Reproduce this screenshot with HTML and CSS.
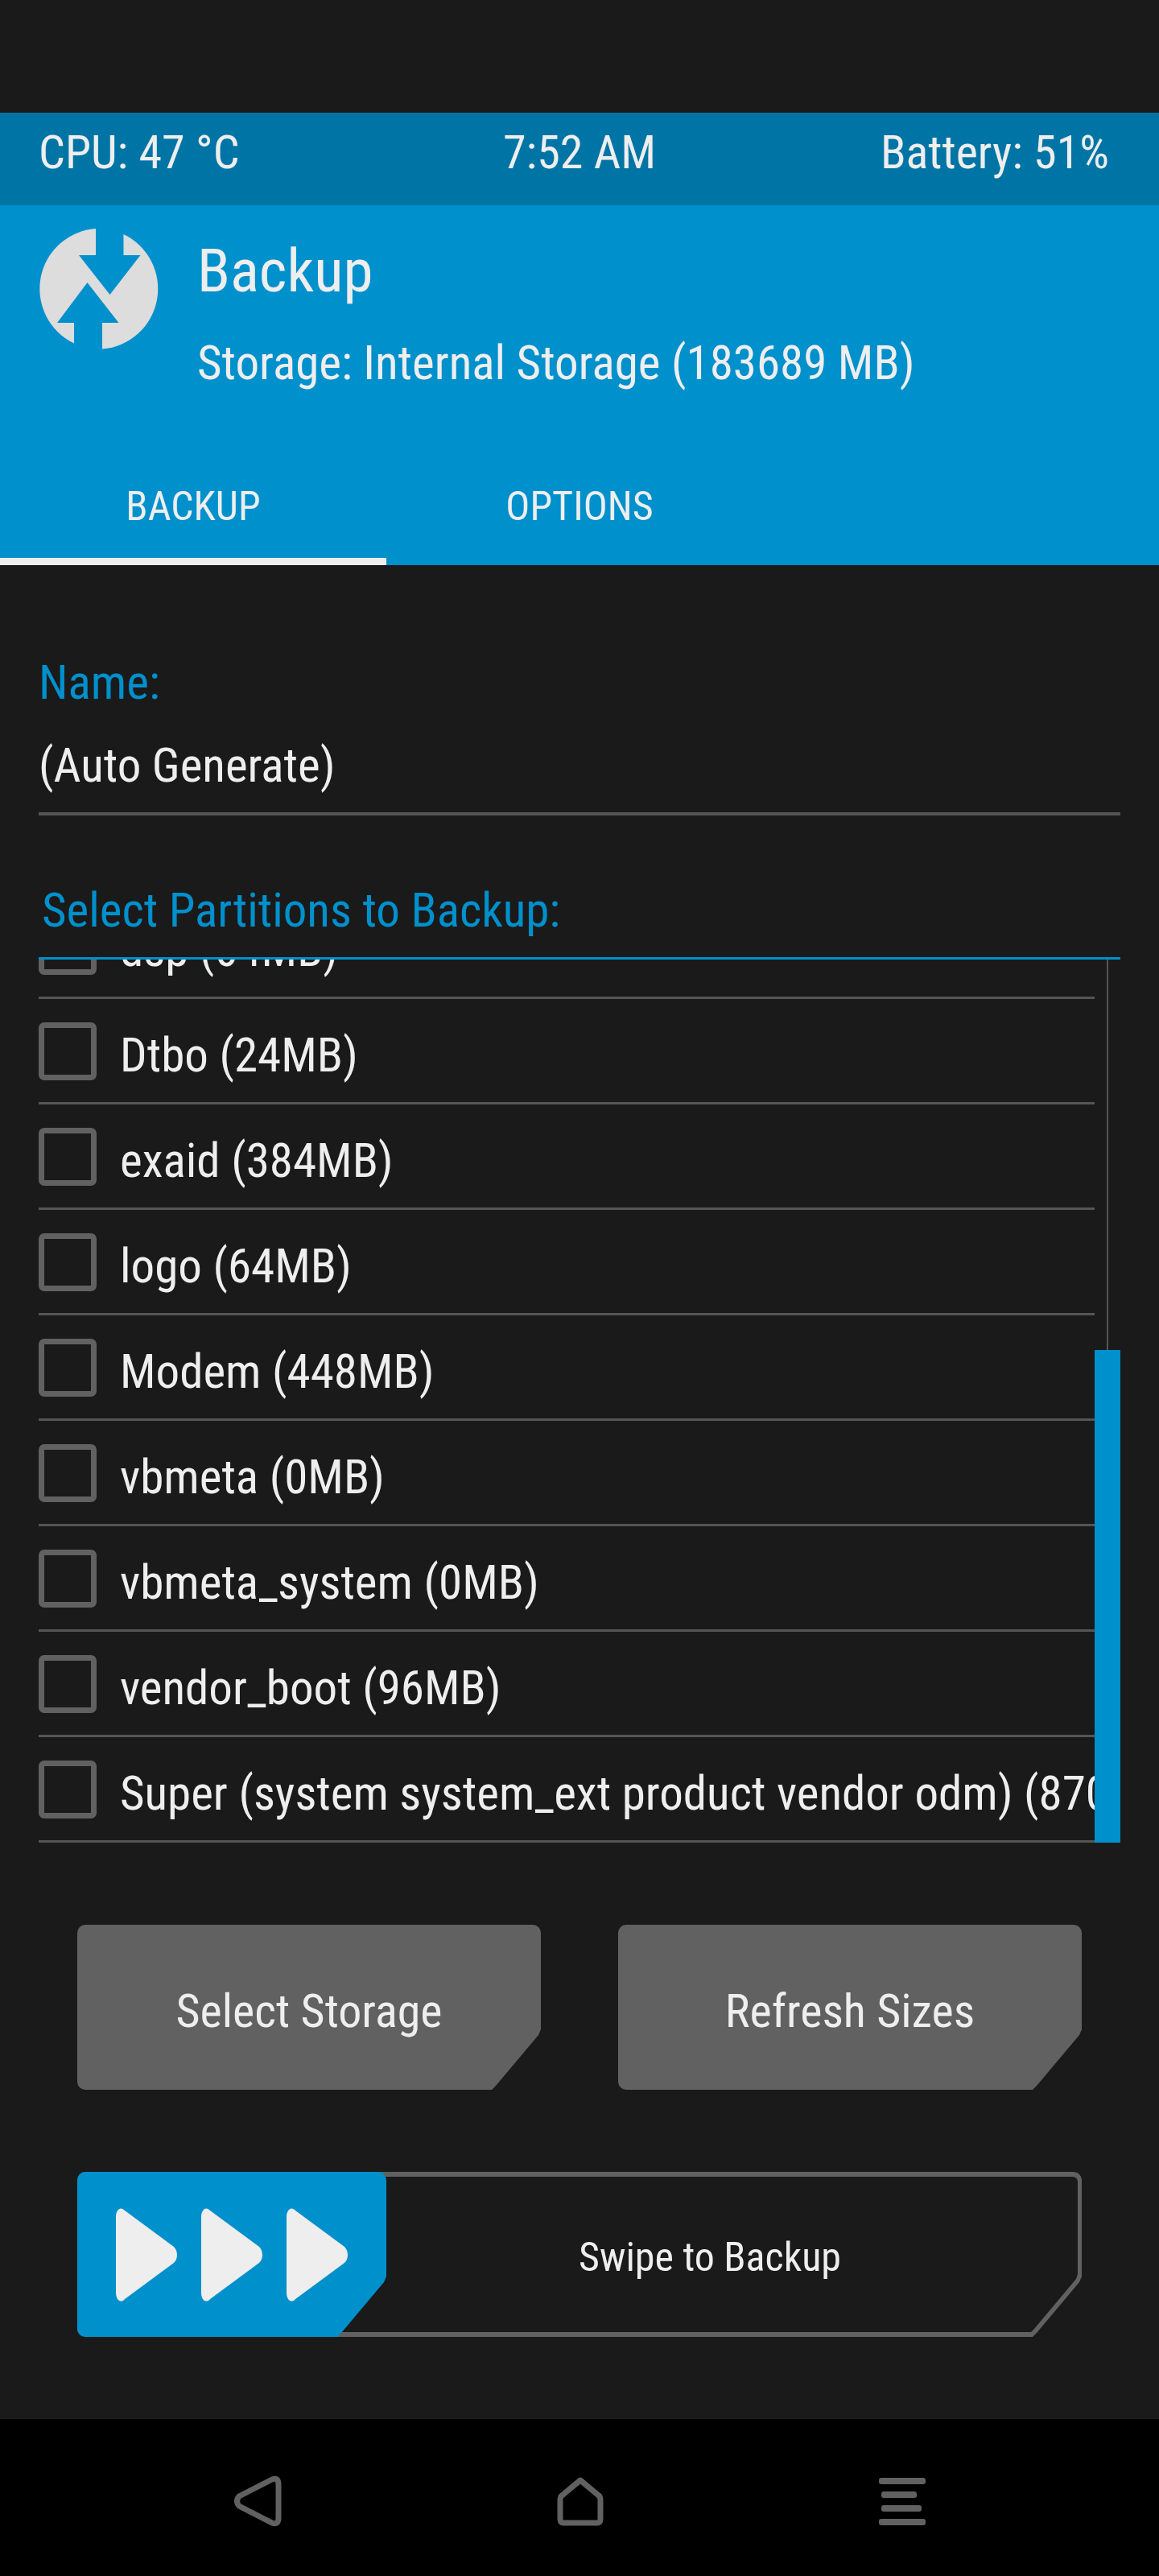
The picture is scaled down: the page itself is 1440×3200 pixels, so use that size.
FILE: index.html
```html
<!DOCTYPE html>
<html lang="en">
<head>
<meta charset="utf-8">
<meta name="viewport" content="width=device-width, initial-scale=1">
<title>Backup</title>
<link rel="stylesheet" href="styles.css">
</head>
<body>
<div class="page">
  <div class="statusbar">
    <span>CPU: 47 °C</span>
    <span class="clock">7:52 AM</span>
    <span class="battery">Battery: 51%</span>
  </div>
  <header class="header">
    <div class="heading">
      <svg class="logo" viewBox="0 0 150 150" aria-hidden="true">
        <path fill="#dddddd" d="M71 0V33H50L88.500 82L126.500 33H105.500V7A75 75 0 0 1 79 149.500V117H99.500L60.500 67L23 117H44V142.500A75 75 0 0 1 71 0Z"/>
      </svg>
      <div class="titles">
        <h1 class="title">Backup</h1>
        <p class="subtitle">Storage: Internal Storage (183689 MB)</p>
      </div>
    </div>
    <nav class="tabs">
      <a class="tab tab-active" href="#backup">BACKUP</a>
      <a class="tab" href="#options">OPTIONS</a>
    </nav>
  </header>
  <main class="main" id="backup">
    <label class="caption" for="name">Name:</label>
    <input class="name" id="name" type="text" value="(Auto Generate)">
    <h2 class="caption list-caption">Select Partitions to Backup:</h2>
    <div class="list">
      <ul class="rows">
        <li class="row"><input class="check" type="checkbox" id="p1"><label class="row-label" for="p1">dsp (64MB)</label></li>
        <li class="row"><input class="check" type="checkbox" id="p2"><label class="row-label" for="p2">Dtbo (24MB)</label></li>
        <li class="row"><input class="check" type="checkbox" id="p3"><label class="row-label" for="p3">exaid (384MB)</label></li>
        <li class="row"><input class="check" type="checkbox" id="p4"><label class="row-label" for="p4">logo (64MB)</label></li>
        <li class="row"><input class="check" type="checkbox" id="p5"><label class="row-label" for="p5">Modem (448MB)</label></li>
        <li class="row"><input class="check" type="checkbox" id="p6"><label class="row-label" for="p6">vbmeta (0MB)</label></li>
        <li class="row"><input class="check" type="checkbox" id="p7"><label class="row-label" for="p7">vbmeta_system (0MB)</label></li>
        <li class="row"><input class="check" type="checkbox" id="p8"><label class="row-label" for="p8">vendor_boot (96MB)</label></li>
        <li class="row"><input class="check" type="checkbox" id="p9"><label class="row-label" for="p9">Super (system system_ext product vendor odm) (870</label></li>
      </ul>
      <div class="scrollbar"><div class="track"></div><div class="thumb"></div></div>
    </div>
    <div class="actions">
      <button class="action cut" type="button">Select Storage</button>
      <button class="action cut" type="button">Refresh Sizes</button>
    </div>
    <button class="swipe cut" type="button">
      <span class="handle cut">
        <svg class="arrows" viewBox="0 0 288 116" aria-hidden="true">
          <g fill="#eeeeee">
            <path id="arrow" d="M0 11C0 2 6-3 11 3L72 48Q76 52 76 58Q76 64 72 68L11 113C6 119 0 114 0 105Z"/>
            <use href="#arrow" x="106"/>
            <use href="#arrow" x="212"/>
          </g>
        </svg>
      </span>
      <span class="swipe-label">Swipe to Backup</span>
    </button>
  </main>
  <nav class="navbar">
    <button class="key" type="button" aria-label="Back">
      <svg class="key-icon" viewBox="0 0 60 64"><path d="M47 5L6 26Q1 32 6 38L47 59Q55 62 55 53V11Q55 2 47 5Z" fill="none" stroke="#616161" stroke-width="7"/></svg>
    </button>
    <button class="key" type="button" aria-label="Home">
      <svg class="key-icon" viewBox="0 0 60 64"><path d="M30 6L6 26Q5 28 5 31V54Q5 59 9 59H51Q55 59 55 54V31Q55 28 54 26Z" fill="none" stroke="#616161" stroke-width="7" stroke-linejoin="round"/></svg>
    </button>
    <button class="key" type="button" aria-label="Menu">
      <svg class="key-icon" viewBox="0 0 60 64"><g fill="#616161"><rect x="1" y="3" width="58" height="8" rx="3"/><rect x="4" y="20" width="44" height="8" rx="3"/><rect x="4" y="37" width="50" height="8" rx="3"/><rect x="1" y="54" width="58" height="8" rx="3"/></g></svg>
    </button>
  </nav>
</div>
</body>
</html>
```
FILE: styles.css
```css
* { box-sizing: border-box; }

body {
  margin: 0;
  background: #1a1a1a;
  color: #eeeeee;
  font-family: "Roboto Condensed", Roboto, sans-serif;
  font-size: 59px;
  line-height: 72px;
}

h1, h2, p, ul { margin: 0; padding: 0; font-weight: 400; }

button, input {
  margin: 0;
  padding: 0;
  border: 0;
  border-radius: 0;
  background: none;
  color: inherit;
  font: inherit;
}

.page {
  display: flex;
  flex-direction: column;
  min-height: 100vh;
  padding-top: 140px;
}

.statusbar {
  display: grid;
  grid-template-columns: 1fr auto 1fr;
  height: 115px;
  padding: 0 48px;
  background: #0075a5;
  font-size: 58px;
  line-height: 98px;
  white-space: nowrap;
}
.battery { padding-right: 14px; text-align: right; }

.header { background: #0090cc; }
.heading {
  display: flex;
  gap: 47px;
  height: 310px;
  padding: 29px 48px 0;
}
.logo { flex: none; width: 150px; height: 150px; }
.titles {
  display: flex;
  flex-direction: column;
  gap: 34px;
  padding-top: 7px;
  white-space: nowrap;
}
.title { font-size: 75px; line-height: 90px; }
.tabs { display: grid; grid-template-columns: repeat(3, 1fr); }
.tab {
  border-bottom: 9px solid transparent;
  color: inherit;
  font-size: 50px;
  line-height: 128px;
  text-align: center;
  text-decoration: none;
}
.tab-active { border-color: #eeeeee; }

.main {
  display: flex;
  flex: 1;
  flex-direction: column;
  padding: 110px 48px 102px;
}
.caption { color: #0090cc; font-size: 59px; }
.name {
  width: 100%;
  height: 129px;
  padding-top: 8px;
  border-bottom: 4px solid #555555;
}
.list-caption { padding: 82px 4px 22px; }

.list {
  display: flex;
  flex: 1 1 0;
  min-height: 789px;
  border-top: 3px solid #0090cc;
  overflow: hidden;
}
.rows {
  display: flex;
  flex: 1;
  flex-direction: column;
  justify-content: flex-end;
  min-width: 0;
  list-style: none;
}
.row {
  display: flex;
  flex: none;
  align-items: center;
  gap: 29px;
  height: 131px;
  padding-top: 2px;
  border-bottom: 3px solid #555555;
  overflow: hidden;
  white-space: nowrap;
}
.check {
  flex: none;
  width: 72px;
  height: 72px;
  border: 7px solid #616161;
  border-radius: 7px;
  appearance: none;
}
.check:checked { background: #0090cc; }
.row-label { padding-top: 10px; }
.scrollbar {
  display: flex;
  flex: none;
  flex-direction: column;
  align-items: center;
  width: 32px;
}
.track { flex: 485; width: 2px; background: #555555; }
.thumb { flex: 612; width: 100%; background: #0090cc; }

.cut {
  border-radius: 10px;
  clip-path: polygon(0 0, 100% 0, 100% calc(100% - 75px), calc(100% - 3px) calc(100% - 68px), calc(100% - 56px) calc(100% - 5px), calc(100% - 61px) 100%, 0 100%);
}
.actions {
  display: grid;
  grid-template-columns: 1fr 1fr;
  gap: 96px;
  padding: 102px 48px;
}
.action {
  height: 205px;
  padding-top: 8px;
  background: #616161;
  font-size: 58px;
}

.swipe {
  display: flex;
  position: relative;
  align-items: center;
  height: 205px;
  margin: 0 48px;
  background: #616161;
  font-size: 50px;
}
.swipe::before {
  content: "";
  position: absolute;
  inset: 6px 5px;
  border-radius: 6px;
  background: #1a1a1a;
  clip-path: polygon(0 0, 100% 0, 100% calc(100% - 72px), calc(100% - 2px) calc(100% - 66px), calc(100% - 54px) calc(100% - 4px), calc(100% - 58px) 100%, 0 100%);
}
.handle {
  display: flex;
  z-index: 1;
  align-items: center;
  width: 384px;
  height: 100%;
  padding-left: 48px;
  background: #0090cc;
}
.arrows { flex: none; width: 288px; height: 116px; }
.swipe-label {
  z-index: 1;
  flex: 1;
  margin-left: -60px;
  padding-top: 6px;
}

.navbar {
  display: flex;
  align-items: center;
  justify-content: center;
  gap: 340px;
  height: 195px;
  padding: 8px 0 0 2px;
  background: #000000;
}
.key { display: flex; }
.key-icon { width: 60px; height: 64px; }
```
